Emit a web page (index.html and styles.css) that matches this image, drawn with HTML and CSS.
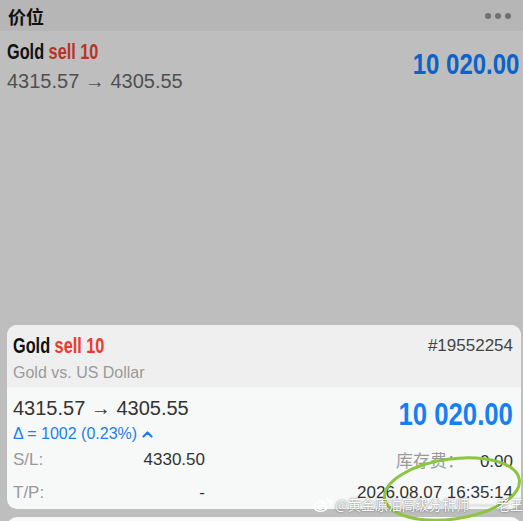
FILE: index.html
```html
<!DOCTYPE html>
<html lang="zh-CN">
<head>
    <meta charset="UTF-8">
    <meta name="viewport" content="width=device-width, initial-scale=1.0">
    <title>价位</title>
    <link rel="stylesheet" href="styles.css">
</head>
<body>

    <!-- Top bar -->
    <div class="topbar">
        <span class="topbar-title">价位</span>
        <span class="dots"><i></i><i></i><i></i></span>
    </div>

    <!-- Position row (dimmed) -->
    <div class="position-row">
        <div class="pos-left">
            <div class="pos-title"><span class="cond">Gold <span class="sell">sell 10</span></span></div>
            <div class="pos-price">4315.57 &rarr; 4305.55</div>
        </div>
        <div class="pos-profit"><span class="cond-r">10 020.00</span></div>
    </div>

    <div class="list-space"></div>

    <!-- Detail card -->
    <div class="card">
        <div class="card-head">
            <div class="head-line">
                <div class="card-title"><span class="cond">Gold <span class="sell">sell 10</span></span></div>
                <div class="ticket">#19552254</div>
            </div>
            <div class="card-sub">Gold vs. US Dollar</div>
        </div>
        <div class="card-body">
            <div class="body-line">
                <div>
                    <div class="card-price">4315.57 &rarr; 4305.55</div>
                    <div class="delta">&Delta; = 1002 (0.23%)
                        <svg class="chev" width="11" height="8" viewBox="0 0 11 8"><path d="M1.5 6.5 L5.5 2.5 L9.5 6.5" fill="none" stroke="#1a7ff0" stroke-width="2.2" stroke-linecap="round" stroke-linejoin="round"/></svg>
                    </div>
                </div>
                <div class="card-profit"><span class="cond-r big">10 020.00</span></div>
            </div>
            <div class="detail-row">
                <div class="pair"><span class="label">S/L:</span><span class="val">4330.50</span></div>
                <div class="right"><span class="label">库存费：</span><span class="val val-gap">0.00</span></div>
            </div>
            <div class="detail-row">
                <div class="pair"><span class="label">T/P:</span><span class="val">-</span></div>
                <div class="right"><span class="val">2026.08.07 16:35:14</span></div>
            </div>
        </div>
    </div>

    <div class="next-card"></div>

    <!-- Annotation + watermark overlay -->
    <svg class="ring" width="160" height="80" viewBox="0 0 160 80">
        <ellipse cx="80" cy="41" rx="68" ry="30" transform="rotate(-8 80 41)" fill="none" stroke="#8cc63f" stroke-width="3"/>
    </svg>
    <div class="watermark">
        <svg width="19" height="16" viewBox="0 0 20 17"><path d="M8 4 C3 6 0 10 2 13 C4 16 11 16 14 13 C16 11 15 9 13 9 C14 7 12 6 9 7 C11 5 10 3 8 4 Z" fill="none" stroke="#fff" stroke-width="1.4"/><ellipse cx="7.5" cy="11.5" rx="2.4" ry="1.8" fill="none" stroke="#fff" stroke-width="1.1"/><path d="M14 3 A4 4 0 0 1 18 7 M14 0.8 A6.5 6.5 0 0 1 19.8 7" fill="none" stroke="#fff" stroke-width="1.3"/></svg>
        <span>@黄金原油高级分析师——老王</span>
    </div>

</body>
</html>
```

FILE: styles.css
```css
body {
    margin: 0;
    background: #bebebe;
    font-family: "Liberation Sans", Arial, sans-serif;
    width: 523px;
    height: 521px;
    overflow: hidden;
    position: relative;
}
.topbar {
    height: 31px;
    background: #b6b6b6;
    display: flex;
    align-items: center;
    justify-content: space-between;
    padding: 0 12px 0 8px;
}
.topbar-title {
    font-family: "Noto Sans CJK SC", sans-serif;
    font-weight: bold;
    font-size: 18px;
    color: #111;
}
.dots { display: flex; gap: 4px; }
.dots i { width: 6px; height: 6px; border-radius: 50%; background: #707070; }

/* condensed look for titles and profit numbers */
.cond { display: inline-block; transform: scaleX(0.74); transform-origin: left center; white-space: nowrap; }
.cond-r { display: inline-block; transform: scaleX(0.8); transform-origin: right center; white-space: nowrap; }
.cond-r.big { transform: scaleX(0.83); }

.position-row {
    display: flex;
    justify-content: space-between;
    align-items: center;
    padding: 8px 4px 0 7px;
}
.pos-title, .card-title {
    font-weight: bold;
    font-size: 22px;
    color: #111;
    line-height: 26px;
}
.pos-title .sell { color: #b93326; }
.card-title .sell { color: #ee3a2a; }
.pos-price {
    font-size: 20px;
    color: #505050;
    margin-top: 5px;
}
.pos-profit {
    font-weight: bold;
    font-size: 30px;
    color: #0b63c9;
    margin-top: -4px;
}
.list-space { height: 232px; }

.card {
    margin: 0 2px 0 7px;
    border-radius: 10px;
    overflow: hidden;
    background: #f7f8f8;
}
.card-head {
    background: #efefef;
    padding: 8px 8px 5px 6px;
}
.head-line { display: flex; justify-content: space-between; align-items: center; }
.ticket { font-size: 17px; color: #444; }
.card-sub { font-size: 16px; color: #9a9a9a; margin-top: 5px; }

.card-body { padding: 10px 8px 0 6px; }
.body-line { display: flex; justify-content: space-between; }
.card-price { font-size: 20px; color: #333; }
.delta {
    font-size: 16px;
    color: #1a7ff0;
    margin-top: 5px;
    display: flex;
    align-items: center;
    gap: 5px;
}
.card-profit {
    font-weight: bold;
    font-size: 31px;
    color: #1580f5;
}
.detail-row {
    display: grid;
    grid-template-columns: 192px 1fr;
    font-size: 17px;
    height: 33px;
    align-items: center;
}
.pair { display: flex; justify-content: space-between; }
.right { text-align: right; }
.label { color: #9a9a9a; font-family: "Liberation Sans", "Noto Sans CJK SC", sans-serif; }
.val { color: #333; }
.val-gap { margin-left: 16px; }

.next-card {
    margin: 8px 2px 0 7px;
    height: 20px;
    border-radius: 10px 10px 0 0;
    background: #f7f8f8;
}

.ring { position: absolute; left: 372px; top: 448px; }
.watermark {
    position: absolute;
    left: 313px;
    top: 497px;
    display: flex;
    align-items: center;
    gap: 3px;
    line-height: 1;
    white-space: nowrap;
    color: #fff;
    font-family: "Noto Sans CJK SC", sans-serif;
    font-size: 13.5px;
    text-shadow: 0 0 1px rgba(0, 0, 0, 0.5), 0 0 3px rgba(0, 0, 0, 0.3);
}
```
